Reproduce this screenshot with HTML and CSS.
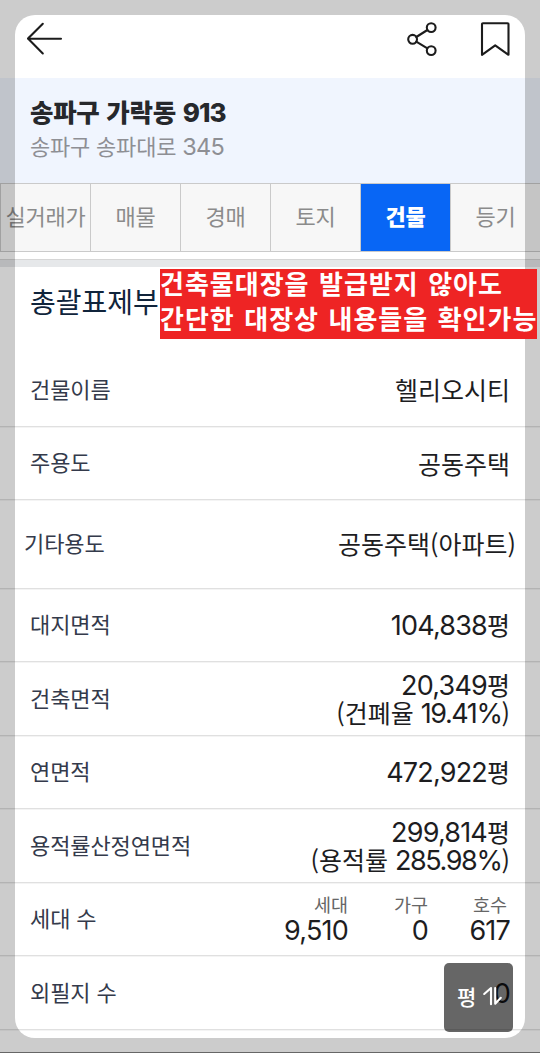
FILE: index.html
```html
<!DOCTYPE html>
<html lang="ko">
<head>
<meta charset="utf-8">
<title>송파구 가락동 913</title>
<link rel="stylesheet" href="styles.css">
</head>
<body>
<div class="screen">
  <header class="topbar">
    <svg class="back" width="38" height="36" viewBox="0 0 38 36"><path d="M17.8 3.8 3 18.6 17.8 33.4M3 18.8H36"/></svg>
    <svg class="share" width="34" height="38" viewBox="0 0 34 38"><circle cx="6.6" cy="19.3" r="4.4"/><circle cx="25.2" cy="7.6" r="4.4"/><circle cx="25.2" cy="30.6" r="4.4"/><path d="M10.3 17 21.4 10M10.3 21.6 21.4 28.3"/></svg>
    <svg class="bookmark" width="32" height="37" viewBox="0 0 32 37"><path d="M3 3.3H27.5Q28.5 3.3 28.5 4.3V34.8L15.2 25.3 2 34.8V4.3Q2 3.3 3 3.3Z"/></svg>
  </header>
  <section class="address">
    <h1>송파구 가락동 <span class="num">913</span></h1>
    <p>송파구 송파대로 <span class="num">345</span></p>
  </section>
  <nav class="tabs">
    <span class="tab">실거래가</span><span class="tab">매물</span><span class="tab">경매</span><span class="tab">토지</span><span class="tab active">건물</span><span class="tab">등기</span>
  </nav>
  <div class="divider"></div>
  <h2 class="title">총괄표제부</h2>
  <main class="rows">
    <div class="row"><span class="label">건물이름</span><span class="value">헬리오시티</span></div>
    <div class="row"><span class="label">주용도</span><span class="value">공동주택</span></div>
    <div class="row wide"><span class="label">기타용도</span><span class="value">공동주택(아파트)</span></div>
    <div class="row"><span class="label">대지면적</span><span class="value"><span class="num">104,838</span>평</span></div>
    <div class="row"><span class="label">건축면적</span><span class="value"><span class="num">20,349</span>평<br>(건폐율 <span class="num ratio">19.41%</span>)</span></div>
    <div class="row"><span class="label">연면적</span><span class="value"><span class="num">472,922</span>평</span></div>
    <div class="row"><span class="label">용적률산정연면적</span><span class="value"><span class="num">299,814</span>평<br>(용적률 <span class="num ratio">285.98%</span>)</span></div>
    <div class="row"><span class="label">세대 수</span>
      <span class="counts">
        <span class="count"><small>세대</small><span class="num">9,510</span></span>
        <span class="count"><small>가구</small><span class="num">0</span></span>
        <span class="count"><small class="inset">호수</small><span class="num">617</span></span>
      </span>
    </div>
    <div class="row"><span class="label">외필지 수</span><span class="value"><span class="num">0</span></span></div>
  </main>
  <div class="unit">평<svg width="22" height="20" viewBox="0 0 22 20"><path d="M2.2 8 9 2V18.3M13.2 2V17.8L18.8 11.8"/></svg></div>
  <div class="frame"></div>
  <div class="note">건축물대장을 발급받지 않아도<br>간단한 대장상 내용들을 확인가능</div>
</div>
</body>
</html>
```
FILE: styles.css
```css
* { box-sizing: border-box; }
body { margin: 0; font-family: "Noto Sans CJK KR", sans-serif; }
.screen {
  position: relative;
  width: 540px;
  height: 1053px;
  overflow: hidden;
  background: #fff;
  color: #1d1d1f;
}
h1, h2, p { margin: 0; }
svg { fill: none; stroke: #1c1c1c; stroke-width: 2.1; stroke-linecap: round; stroke-linejoin: round; }
.num { font-family: Inter, sans-serif; line-height: 1; }

.topbar { display: flex; align-items: flex-start; height: 78px; padding: 20px 28px 0 25px; }
.share { margin-left: auto; margin-right: 40px; }

.address { height: 105px; padding: 16px 30px 0; background: #f0f5fe; }
.address h1 { font-size: 25.5px; line-height: 34px; font-weight: 900; letter-spacing: -.3px; color: #26282c; white-space: nowrap; }
.address h1 .num { font-size: 26px; font-weight: 800; letter-spacing: -.9px; }
.address p { font-size: 22px; line-height: 34px; font-weight: 400; color: #8e8f94; letter-spacing: -.2px; }
.address p .num { font-size: 23.5px; letter-spacing: -.7px; }

.tabs { display: flex; width: 542px; margin-left: -1px; height: 69px; border: 1px solid #cacaca; border-left-width: 2px; }
.tab { flex: 0 0 90px; height: 67px; border-right: 1px solid #cacaca; background: #f7f7f7; font-size: 22px; line-height: 62px; text-align: center; color: #8b8b8b; letter-spacing: -.2px; }
.tab.active { background: #0866f5; color: #fff; font-weight: 800; }
.divider { height: 8px; margin-top: 7px; border-top: 1px solid #d6d6d6; background: #e6e8ea; }

.title { height: 86.4px; padding: 13px 30px 0; font-size: 28px; line-height: 42px; font-weight: 400; color: #10243b; }
.row { display: flex; align-items: center; justify-content: space-between; height: 73.5px; padding: 0 30px; border-bottom: 1px solid #e0e0e0; box-shadow: 0 1px 0 #f4f4f4; }
.row.wide { height: 88.5px; padding: 0 24px; }
.label { padding-bottom: 4px; font-size: 22px; line-height: 30px; color: #343a4b; letter-spacing: -.1px; }
.wide .value { padding-bottom: 2px; }
.value { font-size: 25px; line-height: 27px; text-align: right; }
.value .num, .count .num { font-size: 27px; letter-spacing: -.8px; }
.value .ratio { letter-spacing: -1.4px; }
.counts { display: grid; grid-template-columns: 80px 80px 82px; }
.count { display: grid; justify-items: end; margin-top: -3px; }
.count small { font-size: 18.5px; line-height: 26px; color: #666; }
.count .inset { padding-right: 3px; }

.unit { position: absolute; left: 444px; top: 963px; width: 69px; height: 69px; padding: 0 0 3px 13px; display: flex; align-items: center; gap: 6px; border-radius: 5px; background: rgba(0,0,0,.6); color: #fff; font-size: 21px; font-weight: 500; }
.unit svg { stroke: #fff; }
.frame { position: absolute; left: 15px; top: 15px; width: 510px; height: 1023px; border-radius: 20px; box-shadow: 0 0 0 60px rgba(0,0,0,.2); }
.screen::after { content: ""; position: absolute; left: 0; right: 0; bottom: 0; height: 1px; background: #666; }
.note { position: absolute; left: 160px; top: 269px; width: 377px; height: 70px; background: #ee2424; color: #fff; font-size: 26px; line-height: 35px; font-weight: 700; letter-spacing: 1px; word-spacing: 1.2px; white-space: nowrap; }
.note::before { content: ""; display: block; margin-top: -4px; }
```
